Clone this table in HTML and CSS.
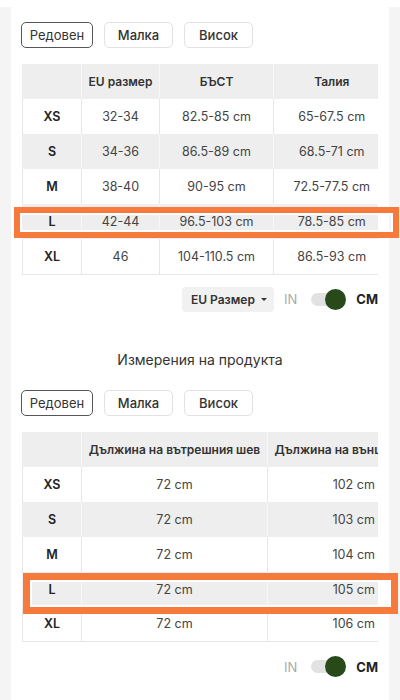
FILE: index.html
```html
<!DOCTYPE html>
<html lang="bg">
<head>
<meta charset="utf-8">
<title>Размери</title>
<link rel="stylesheet" href="styles.css">
</head>
<body>
<div class="topstrip"></div>
<main class="card">
  <section class="block">
    <div class="tabs">
      <button class="tab tab-active tab-wide">Редовен</button>
      <button class="tab">Малка</button>
      <button class="tab">Висок</button>
    </div>
    <div class="table-wrap">
      <table class="size-table">
        <colgroup><col class="c-size"><col class="c-eu"><col class="c-bust"><col class="c-waist"></colgroup>
        <thead>
          <tr><th></th><th>EU размер</th><th>БЪСТ</th><th>Талия</th></tr>
        </thead>
        <tbody>
          <tr><td class="sz">XS</td><td>32-34</td><td>82.5-85 cm</td><td>65-67.5 cm</td></tr>
          <tr><td class="sz">S</td><td>34-36</td><td>86.5-89 cm</td><td>68.5-71 cm</td></tr>
          <tr><td class="sz">M</td><td>38-40</td><td>90-95 cm</td><td>72.5-77.5 cm</td></tr>
          <tr><td class="sz">L</td><td>42-44</td><td>96.5-103 cm</td><td>78.5-85 cm</td></tr>
          <tr><td class="sz">XL</td><td>46</td><td>104-110.5 cm</td><td>86.5-93 cm</td></tr>
        </tbody>
      </table>
    </div>
    <div class="controls">
      <button class="dropdown">EU Размер <span class="caret"></span></button>
      <span class="unit unit-off">IN</span>
      <span class="toggle"><span class="knob"></span></span>
      <span class="unit unit-on">CM</span>
    </div>
  </section>

  <section class="block block-second">
    <h2 class="title">Измерения на продукта</h2>
    <div class="tabs">
      <button class="tab tab-active tab-wide">Редовен</button>
      <button class="tab">Малка</button>
      <button class="tab">Висок</button>
    </div>
    <div class="table-wrap">
      <table class="size-table">
        <colgroup><col class="c-size"><col class="c-inseam"><col class="c-outseam"></colgroup>
        <thead>
          <tr><th></th><th>Дължина на вътрешния шев</th><th>Дължина на външния шев</th></tr>
        </thead>
        <tbody>
          <tr><td class="sz">XS</td><td>72 cm</td><td>102 cm</td></tr>
          <tr><td class="sz">S</td><td>72 cm</td><td>103 cm</td></tr>
          <tr><td class="sz">M</td><td>72 cm</td><td>104 cm</td></tr>
          <tr><td class="sz">L</td><td>72 cm</td><td>105 cm</td></tr>
          <tr><td class="sz">XL</td><td>72 cm</td><td>106 cm</td></tr>
        </tbody>
      </table>
    </div>
    <div class="controls">
      <span class="unit unit-off">IN</span>
      <span class="toggle"><span class="knob"></span></span>
      <span class="unit unit-on">CM</span>
    </div>
  </section>

  <div class="highlight hl-first"></div>
  <div class="highlight hl-second"></div>
</main>
</body>
</html>
```
FILE: styles.css
```css
* { box-sizing: border-box; }

html, body {
  margin: 0;
  padding: 0;
}

body {
  background: #f4f4f4;
  font-family: Inter, "Noto Sans", sans-serif;
  color: #333;
  overflow: hidden;
}

.topstrip {
  height: 7px;
  background: #fff;
}

.card {
  position: relative;
  margin: 0 11px;
  background: #fff;
  padding: 15px 11px 40px;
  min-height: 720px;
}

.tabs {
  display: flex;
  gap: 11px;
}

.tab {
  width: 69px;
  height: 26px;
  padding: 0;
  border: 1px solid #e2e2e2;
  border-radius: 5px;
  background: #fff;
  font-family: inherit;
  font-size: 13px;
  font-weight: 500;
  color: #333;
}

.tab-wide { width: 72px; margin-left: -1px; }

.tab-active {
  border-color: #555;
  font-weight: 400;
}

.table-wrap {
  margin-top: 16px;
  overflow: hidden;
}

.size-table {
  border-collapse: collapse;
  table-layout: fixed;
  width: max-content;
  font-size: 12.5px;
}

.c-size { width: 59px; }
.c-eu { width: 78px; }
.c-bust { width: 114px; }
.c-waist { width: 116px; }
.c-inseam { width: 186px; }
.c-outseam { width: 172px; }

.size-table th,
.size-table td {
  height: 35px;
  padding: 0 6px;
  text-align: center;
  white-space: nowrap;
  overflow: hidden;
  border-left: 1px solid #e6e6e6;
}

.size-table th {
  background: #eeeeee;
  font-size: 12px;
  font-weight: 600;
  color: #333;
  border-left-color: #f7f7f7;
}

.size-table th:first-child { border-left-color: #eeeeee; }

.size-table td {
  color: #444;
}

.size-table tbody tr:nth-child(even) td {
  background: #eeeeee;
  border-left-color: #f7f7f7;
}

.size-table tbody tr:nth-child(even) td:first-child { border-left-color: #eeeeee; }

.size-table tbody tr:last-child td {
  border-bottom: 1px solid #e6e6e6;
}

.size-table td.sz {
  font-weight: 600;
  color: #222;
}

.controls {
  display: flex;
  justify-content: flex-end;
  align-items: center;
  height: 25px;
  margin-top: 12px;
}

.dropdown {
  display: flex;
  align-items: center;
  gap: 6px;
  width: 92px;
  height: 25px;
  padding: 0 0 0 9px;
  border: none;
  border-radius: 4px;
  background: #f1f1f1;
  font-family: inherit;
  font-size: 12px;
  font-weight: 600;
  color: #333;
  margin-right: 10px;
}

.caret {
  width: 0;
  height: 0;
  border-left: 3px solid transparent;
  border-right: 3px solid transparent;
  border-top: 3px solid #333;
}

.unit {
  font-size: 13px;
}

.unit-off {
  color: #aaa;
  margin-right: 14px;
}

.unit-on {
  color: #222;
  font-weight: 700;
  margin-left: 10px;
}

.toggle {
  position: relative;
  display: block;
  width: 35px;
  height: 13px;
}

.toggle::before {
  content: "";
  position: absolute;
  left: 0;
  top: 0;
  width: 33px;
  height: 13px;
  border-radius: 7px;
  background: #e2e2e2;
}

.knob {
  position: absolute;
  right: 0;
  top: -4px;
  width: 21px;
  height: 21px;
  border-radius: 50%;
  background: #284a1a;
}

.block-second {
  margin-top: 38px;
}

.title {
  margin: 0 0 20px;
  height: 20px;
  line-height: 20px;
  text-align: center;
  font-size: 14px;
  font-weight: 400;
  color: #333;
}

.highlight {
  position: absolute;
  border: 6px solid #f57a3c;
  box-shadow: inset 0 0 0 2px #fff;
  pointer-events: none;
}

.hl-first {
  left: 3px;
  top: 200px;
  width: 385px;
  height: 31px;
}

.hl-second {
  left: 12px;
  top: 566px;
  width: 375px;
  height: 41px;
  border-width: 7px;
}
```
